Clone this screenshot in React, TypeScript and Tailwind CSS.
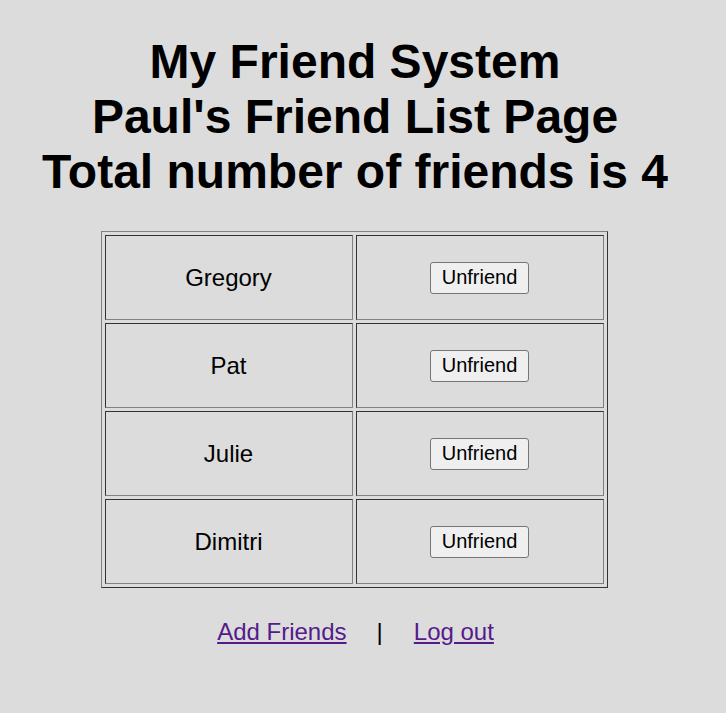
import React from 'react';

const friends = ['Gregory', 'Pat', 'Julie', 'Dimitri'];

const App = () => {
  return (
    <div className="min-h-[713px] bg-[#dcdcdc] font-['Liberation_Sans',Arial,sans-serif] text-black">
      <div className="w-[710px] pt-[34px] flex flex-col items-center">
        {/* Page heading */}
        <h1 className="text-[48px] font-bold leading-[55px] text-center">
          My Friend System
          <br />
          Paul's Friend List Page
          <br />
          Total number of friends is 4
        </h1>

        {/* Friend table */}
        <table className="mt-[32px] mr-[2px] w-[507px] border-separate border-spacing-[3px] border border-t-[#808080] border-l-[#808080] border-b-[#333333] border-r-[#333333]">
          <tbody>
            {friends.map((name) => (
              <tr key={name}>
                <td className="h-[85px] w-[248px] p-0 text-center align-middle text-[24px] border border-t-[#333333] border-l-[#333333] border-b-[#808080] border-r-[#808080]">
                  {name}
                </td>
                <td className="h-[85px] w-[248px] p-0 text-center align-middle border border-t-[#333333] border-l-[#333333] border-b-[#808080] border-r-[#808080]">
                  <button className="h-[32px] w-[99px] rounded-[3px] border border-[#767676] bg-[#efefef] text-[20px] leading-[23px]">
                    Unfriend
                  </button>
                </td>
              </tr>
            ))}
          </tbody>
        </table>

        {/* Footer links */}
        <div className="mt-[30px] ml-[1px] flex items-center text-[24px] leading-[28px]">
          <a href="#" className="text-[#551a8b] underline">Add Friends</a>
          <span className="ml-[30px] mr-[31px]">|</span>
          <a href="#" className="text-[#551a8b] underline">Log out</a>
        </div>
      </div>
    </div>
  );
};

export default App;
